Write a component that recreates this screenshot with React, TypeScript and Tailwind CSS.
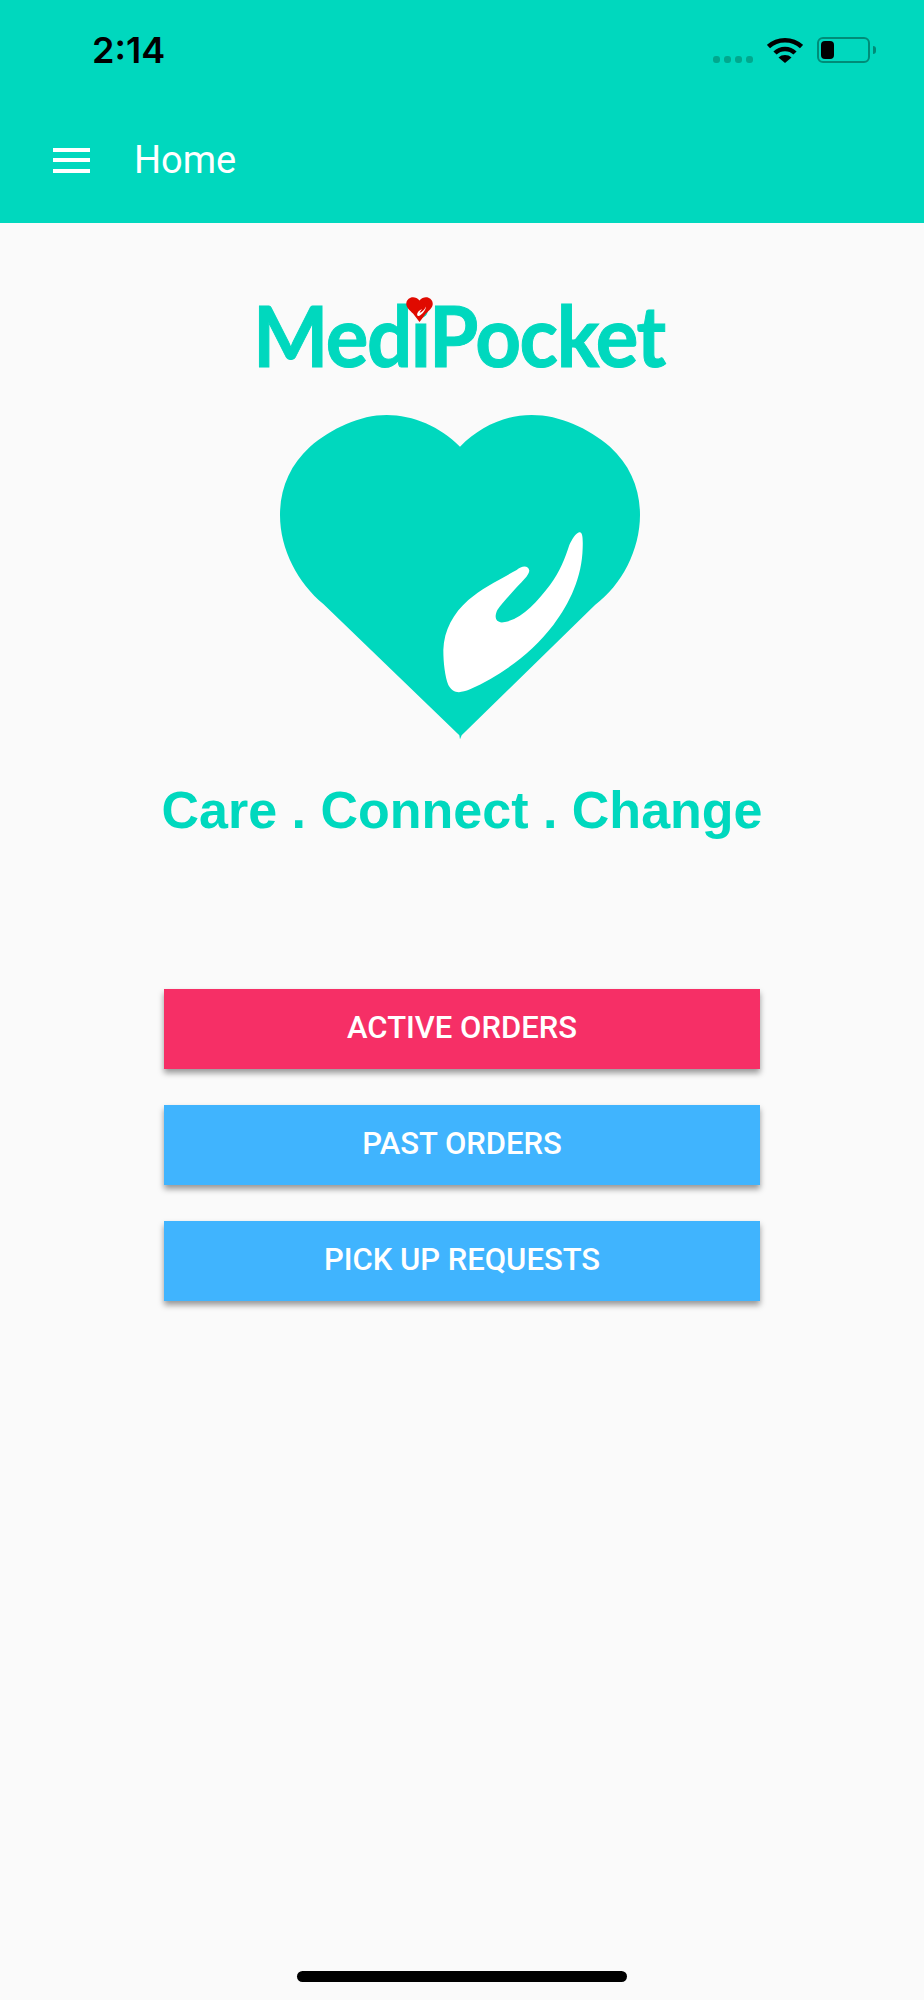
const TEAL = "#00d8be";

function WifiIcon() {
  return (
    <svg width="36" height="26" viewBox="0 0 36 26" fill="none">
      <path d="M1.5 9.5C10.5 1 25.500 1 34.500 9.500" stroke="#000" strokeWidth="4.500" />
      <path d="M8 16C13.500 10.500 22.500 10.500 28 16" stroke="#000" strokeWidth="4.500" />
      <path d="M11.500 20.500C15 17.200 21 17.200 24.500 20.500L18 26Z" fill="#000" />
    </svg>
  );
}

function BatteryIcon() {
  return (
    <div className="flex items-center gap-[3px]">
      <div className="w-[53px] h-[26px] rounded-[6px] border-[2px] border-[#008c78] p-[2px]">
        <div className="w-[13px] h-full rounded-[4px] bg-black" />
      </div>
      <div className="w-[3px] h-[8px] rounded-r-full bg-[#008c78]" />
    </div>
  );
}

function StatusBar() {
  return (
    <div className="flex items-center justify-between h-[100px] pl-[92px] pr-[48px]">
      <span className="text-[36px] font-semibold leading-none text-black font-['Inter',sans-serif]">2:14</span>
      <div className="flex items-end gap-[14px]">
        <div className="flex gap-[4px]">
          <span className="w-[7px] h-[7px] rounded-[3px] bg-[#00a88e]" />
          <span className="w-[7px] h-[7px] rounded-[3px] bg-[#00a88e]" />
          <span className="w-[7px] h-[7px] rounded-[3px] bg-[#00a88e]" />
          <span className="w-[7px] h-[7px] rounded-[3px] bg-[#00a88e]" />
        </div>
        <WifiIcon />
        <BatteryIcon />
      </div>
    </div>
  );
}

function MenuIcon() {
  return (
    <div className="flex flex-col justify-between w-[37px] h-[25px]">
      <span className="h-[4px] bg-white" />
      <span className="h-[4px] bg-white" />
      <span className="h-[4px] bg-white" />
    </div>
  );
}

// the red heart sits on the i of the wordmark
function LogoHeart() {
  return (
    <svg className="absolute left-[148px] top-[16px]" width="27" height="25" viewBox="0 0 27 25">
      <path d="M13.500 3.500C11 0.500 7.500 -0.300 4.500 0.700C1.500 1.800 0 4.500 0.300 7.500C0.700 11 4 13.500 7 16.500L13.500 25L20 16.500C23 13.500 26.300 11 26.700 7.500C27 4.500 25.500 1.800 22.500 0.700C19.500 -0.300 16 0.500 13.500 3.500Z" fill="#e00a00" />
      <path d="M20 9.500C19.500 13.500 16.500 17 13 19C11 19.500 10.500 17 12 15C13 13.500 15 12.500 16 12C15.500 13 14 14.500 13.500 15.500C15.500 16 18.500 12.500 20 9.500Z" fill="#fff" />
    </svg>
  );
}

function BigHeart() {
  return (
    <svg width="400" height="350" viewBox="6 0 1200 1050">
      <path
        d="M600 140C540 80 460 45 380 45C300 45 215 85 150 140C90 195 60 265 60 345C60 450 115 550 190 612L598 1006L600 1018L605 1006L1005 615C1085 555 1140 450 1140 345C1140 265 1110 195 1050 140C985 85 900 45 815 45C735 45 660 80 600 140Z"
        fill={TEAL}
      />
      <path
        d="M958 397C968 395 969 415 968 445C966 530 930 610 880 675C815 760 725 825 630 868C600 880 580 882 565 855C555 830 550 790 550 750C552 690 580 640 625 600C665 565 725 535 770 510C785 497 805 495 808 512C805 528 790 540 770 562C750 585 725 610 712 630C700 655 710 672 735 666C790 655 830 605 870 555C900 515 915 475 928 435C935 420 948 398 958 397Z"
        fill="#fff"
      />
    </svg>
  );
}

function OrderButton({ label, color }: { label: string; color: string }) {
  return (
    <button className={`flex items-center justify-center w-[596px] h-[80px] pb-[1px] text-white text-[31px] font-medium font-['Roboto',sans-serif] shadow-[0_4px_6px_rgba(0,0,0,0.4)] ${color}`}>
      {label}
    </button>
  );
}

export default function App() {
  return (
    <div className="flex flex-col w-[924px] h-[2000px] bg-[#fafafa] overflow-hidden">
      <header className="h-[223px] shrink-0 bg-[#00d8be]">
        <StatusBar />
        <div className="flex items-center gap-[44px] pl-[53px] h-[120px]">
          <MenuIcon />
          <span className="text-[38px] leading-none text-white font-['Roboto',sans-serif]">Home</span>
        </div>
      </header>

      <main className="flex flex-col items-center flex-1">
        <div className="relative mt-[58px] h-[119px] w-[409px]">
          <span className="block ml-[-5px] origin-left scale-x-[0.95] text-[84px] leading-[107px] font-bold tracking-[-1.5px] whitespace-nowrap text-[#00d8be] [-webkit-text-stroke:1px_#00d8be] font-['Lato',sans-serif]">
            MediPocket
          </span>
          <LogoHeart />
        </div>
        <BigHeart />
        <p className="mt-[31px] text-[52px] leading-[58px] font-bold text-[#00d8be] whitespace-nowrap font-['Liberation_Sans',sans-serif]">
          Care . Connect . Change
        </p>
        <div className="flex flex-col gap-[36px] mt-[150px]">
          <OrderButton label="ACTIVE ORDERS" color="bg-[#f62f66]" />
          <OrderButton label="PAST ORDERS" color="bg-[#40b4fe]" />
          <OrderButton label="PICK UP REQUESTS" color="bg-[#40b4fe]" />
        </div>
        <div className="mt-auto mb-[18px] w-[330px] h-[11px] rounded-full bg-black" />
      </main>
    </div>
  );
}
